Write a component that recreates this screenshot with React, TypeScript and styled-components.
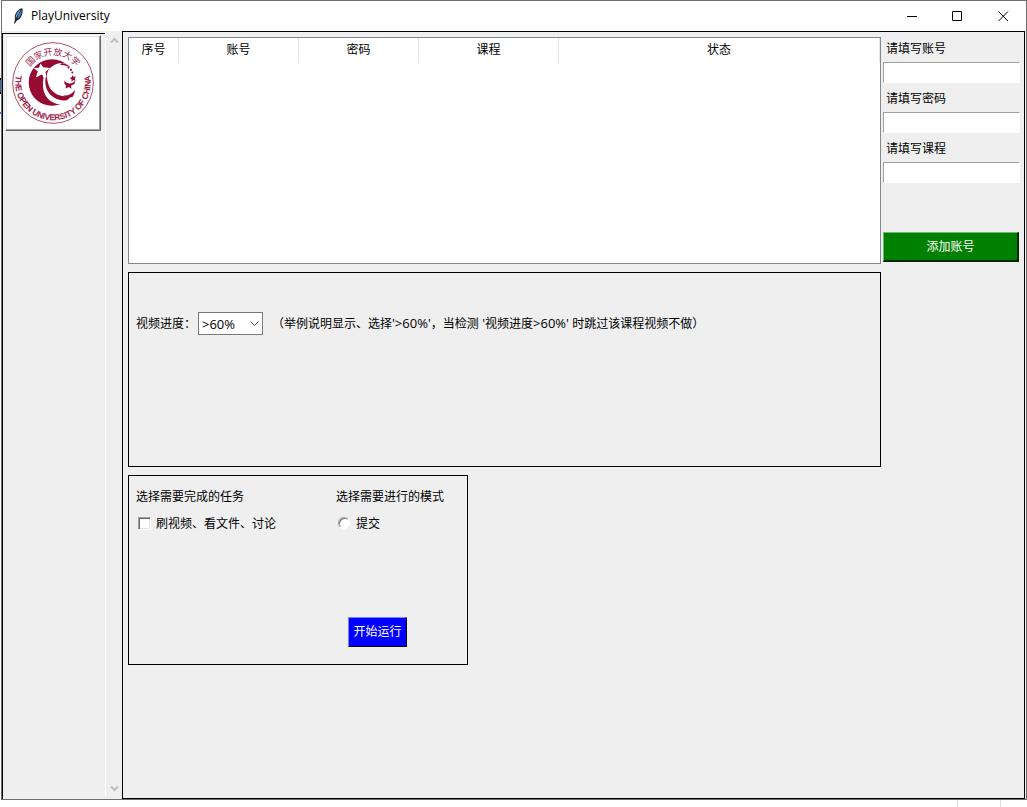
import React, { useState } from "react";
import styled, { createGlobalStyle, css } from "styled-components";

const GlobalStyle = createGlobalStyle`
  *, *::before, *::after { box-sizing: border-box; }
  html, body, #root { height: 100%; }
  body {
    margin: 0;
    background: #fff;
    color: #000;
    font: 12px/16px "Open Sans", "Noto Sans CJK SC", sans-serif;
  }
  button, input, select { font: inherit; color: inherit; margin: 0; }
`;

/* The desktop shows slivers of other windows at its left and bottom edges. */
const Desktop = styled.div`
  display: flex;
  min-height: 100%;
  padding: 0 0 7px 1px;
  background:
    linear-gradient(#000 2px, #2b6cb0 2px 14px, #000 14px 16px, #fff 16px 34px, #2f7de0 34px) left 78px / 1px 36px no-repeat,
    linear-gradient(#ddd, #ddd) right 69px bottom / 1px 7px no-repeat,
    linear-gradient(#ddd, #ddd) right 26px bottom / 1px 7px no-repeat,
    #fff;
`;

const Window = styled.div`
  flex: 1;
  display: flex;
  flex-direction: column;
  min-width: 0;
  border: 1px solid #6d6d6d;
  background: #efefef;
`;

const TitleBar = styled.header`
  display: flex;
  align-items: center;
  height: 30px;
  padding-left: 10px;
  background: #fff;
`;

const Title = styled.h1`
  flex: 1;
  margin: 0 0 0 5px;
  font-size: 12px;
  font-weight: 400;
`;

const WindowButton = styled.button`
  display: flex;
  align-items: center;
  justify-content: center;
  width: 46px;
  height: 30px;
  padding: 0;
  border: 0;
  background: none;
`;

const Body = styled.div`
  flex: 1;
  display: grid;
  grid-template-columns: 103px 17px 1fr;
  padding-right: 1px;
`;

const Sidebar = styled.nav`
  margin-top: 2px;
  padding: 1px 2px;
  border: solid #000;
  border-width: 1px 0 0 1px;
`;

const LogoButton = styled.button`
  display: block;
  width: 96px;
  height: 96px;
  padding: 0;
  background: #fff;
  border: 1px solid;
  border-color: #fff #696969 #696969 #fff;
  box-shadow: inset -1px -1px #a0a0a0, inset 1px 1px #e3e3e3;
`;

const ScrollTrack = styled.div`
  display: flex;
  flex-direction: column;
  justify-content: space-between;
  align-items: center;
  margin-bottom: 3px;
  padding: 6px 0 4px;
  border-left: 1px solid #fff;
`;

const ScrollButton = styled.button`
  display: flex;
  padding: 0;
  border: 0;
  background: none;
`;

const Main = styled.main`
  display: grid;
  grid-template-columns: 1fr 137px;
  align-content: start;
  column-gap: 2px;
  row-gap: 8px;
  padding: 5px 4px 5px 5px;
  border: 1px solid #000;
`;

const TableBox = styled.div`
  height: 227px;
  background: #fff;
  border: 1px solid #828790;
`;

const Table = styled.table`
  width: 100%;
  table-layout: fixed;
  border-collapse: separate;
  border-spacing: 0;
`;

const HeaderCell = styled.th<{ $width?: number }>`
  width: ${(p) => (p.$width ? `${p.$width}px` : "auto")};
  height: 25px;
  padding: 0 0 2px;
  font-weight: 400;
  text-align: center;
  border-right: 1px solid #e5e5e5;
`;

const AccountForm = styled.form`
  display: flex;
  flex-direction: column;
`;

const Field = styled.label`
  display: flex;
  flex-direction: column;
  height: 50px;
  padding-top: 4px;
`;

const FieldName = styled.span`
  padding: 0 3px;
  margin-bottom: 5px;
`;

const Entry = styled.input`
  width: 100%;
  height: 21px;
  padding: 0 4px;
  background: #fff;
  border: 1px solid;
  border-color: #a0a0a0 #fff #fff #a0a0a0;
  outline: 0;
`;

const ActionButton = styled.button<{ $tone: "green" | "blue" }>`
  height: 30px;
  min-width: 59px;
  padding: 0 4px;
  color: #fff;
  border: solid;
  ${(p) =>
    p.$tone === "green"
      ? css`
          background: #008000;
          border-width: 1px 2px 2px 1px;
          border-color: #70b870 #002800 #002800 #70b870;
        `
      : css`
          background: #0000ff;
          border-width: 1px;
          border-color: #8080ff #000 #000 #8080ff;
        `}
`;

const AddRow = styled.div`
  display: flex;
  flex: 1;
  align-items: flex-end;
  padding: 0 1px 2px 0;
  > button { flex: 1; }
`;

const Panel = styled.section`
  border: 1px solid #000;
`;

const ProgressPanel = styled(Panel)`
  display: flex;
  align-items: flex-start;
  height: 195px;
  padding: 39px 7px 0;
`;

const ProgressLabel = styled.label`
  width: 62px;
  line-height: 23px;
  white-space: nowrap;
`;

const SelectWrap = styled.span`
  display: grid;
  align-items: center;
  > * { grid-area: 1 / 1; }
  > svg { justify-self: end; margin-right: 4px; pointer-events: none; }
`;

const Select = styled.select`
  appearance: none;
  width: 65px;
  height: 23px;
  padding: 0 3px;
  font-size: 13px;
  background: #fff;
  border: 1px solid #7a7a7a;
  border-radius: 0;
`;

const Note = styled.p`
  margin: 0 0 0 9px;
  line-height: 23px;
`;

const Latin = styled.span`
  font-size: 13px;
`;

const TaskPanel = styled(Panel)`
  display: flex;
  flex-direction: column;
  justify-content: space-between;
  width: 340px;
  height: 190px;
  padding: 13px 7px 17px;
`;

const Groups = styled.div`
  display: grid;
  grid-template-columns: 200px 1fr;
`;

const Group = styled.fieldset`
  min-width: 0;
  margin: 0;
  padding: 0;
  border: 0;
`;

const Legend = styled.legend`
  padding: 0;
  margin-bottom: 11px;
`;

const Option = styled.label`
  display: flex;
  align-items: flex-start;
  gap: 5px;
  padding-left: 2px;
`;

const Mark = styled.input`
  && { margin-top: 1px; }
  appearance: none;
  width: 13px;
  height: 13px;
  background: #fff;
  border: 1px solid;
  border-color: #a0a0a0 #fff #fff #a0a0a0;
  &[type="checkbox"] { box-shadow: inset 1px 1px #696969, inset -1px -1px #e3e3e3; }
  &[type="radio"] {
    width: 12px;
    height: 12px;
    margin-right: 1px;
    border-radius: 50%;
    box-shadow: inset 1px 1px #777;
  }
  &:checked { background: radial-gradient(circle, #000 3px, #fff 3px); }
`;

const RunRow = styled.div`
  display: flex;
  padding-left: 212px;
`;

const Feather = () => (
  <svg width="14" height="18" viewBox="0 0 14 18" aria-hidden="true">
    <path d="M2.500 16.500 3 12C2.300 9.500 3.200 6.500 5 4.500 6.500 2.500 8.500 1.500 10.200 1.200 11 3 10.600 6 9.900 8 9 10.500 7.500 12.500 5 13.500Z" fill="#17242f" />
    <path d="M3.800 11.500C3.300 8.500 5 5.500 8.800 2.300 7.500 6 5.500 8.500 3.800 11.500Z" fill="#6fb0ea" />
    <path d="M5.200 11.500C6 8.500 7.500 5.500 9.600 3.200 9.900 7 8 10.500 5.200 11.500Z" fill="#4a86bf" />
    <path d="M2.500 16.500 4 12.500" fill="none" stroke="#222" />
  </svg>
);

const Seal = () => (
  <svg width="94" height="94" viewBox="-2 -2 94 94" role="img" aria-label="国家开放大学" style={{ display: "block" }}>
    <defs>
      <path id="seal-top" d="M17 45A28 28 0 0 1 73 45" />
      <path id="seal-bottom" d="M9.700 32A37.500 37.500 0 1 0 80.300 32" />
    </defs>
    <circle cx="45" cy="45" r="40.300" fill="#fff" stroke="#a83a5c" strokeWidth=".9" />
    <circle cx="44" cy="44.500" r="23.300" fill="#970a32" />
    {/* opening on the right and the round hollow of the moon */}
    <path d="M40 33C44 27 51 24 57 25.500L61 27 70 26 72 60 63 57C54 61 42 55 40 45 39 40 38 37 40 33Z" fill="#fff" />
    {/* band that trails from the large star */}
    <path d="M33 32C36 33 38 35 38 38 35 50 42 61 55 62.500 60 63 64 61 67 58L64 62C60 65 55 67 49 66 38 63 33 53 35.500 40Z" fill="#fff" />
    <path d="m32.500 25.500 2.800 3.800 7 .700-4.800 3.700 1 6-4.700-3.200-6 3 2-6-4-3.500 5.200-.2Z" fill="#fff" />
    <path d="M54 25C58 25.500 61 27.500 62 29.500 61 28.500 57 27 52 27Z" fill="#970a32" />
    {/* tail of the bird and the small star */}
    <path d="M56.500 42.500C58 45 61 46 64.500 45L67 42.500 66.500 46 63 47.500 63.500 51 61 49 57.500 50.500 58 47.500C56.500 46.500 56 44.500 56.500 42.500Z" fill="#970a32" />
    <path d="M55 57.500C60 58 64 56 66.800 52 67 54 66 57 64.500 59 61 60 58 59.500 55 57.500Z" fill="#970a32" />
    <path d="m64.500 37 1.300 2 2.400-.4-1.500 2 1 2.200-2.400-.8-1.800 1.700v-2.400l-2-1.300 2.400-.7Z" fill="#970a32" />
    <g fill="#970a32">
      <circle cx="60.500" cy="29.500" r="1.100" />
      <circle cx="63" cy="31.800" r="1.100" />
      <circle cx="64.300" cy="34.600" r="1" />
    </g>
    <text fontFamily="'Noto Sans CJK SC', sans-serif" fontSize="9" fill="#a02a50">
      <textPath href="#seal-top" startOffset="50%" textAnchor="middle">国家开放大学</textPath>
    </text>
    <text fontFamily="'Liberation Sans Narrow', 'Liberation Sans', sans-serif" fontSize="8" fill="#970a32" stroke="#970a32" strokeWidth=".3">
      <textPath href="#seal-bottom" startOffset="50%" textAnchor="middle">THE OPEN UNIVERSITY OF CHINA</textPath>
    </text>
  </svg>
);

const Chevron = ({ up = false }: { up?: boolean }) => (
  <svg width="9" height="7" viewBox="0 0 9 7" aria-hidden="true">
    <path d={up ? "M1 5.500 4.500 2 8 5.500" : "M1 1.500 4.500 5 8 1.500"} fill="none" stroke="#bfbfbf" strokeWidth="2" />
  </svg>
);

const columns = [
  { name: "序号", width: 50 },
  { name: "账号", width: 120 },
  { name: "密码", width: 120 },
  { name: "课程", width: 140 },
  { name: "状态" },
];

const fields = ["请填写账号", "请填写密码", "请填写课程"];

export default function App() {
  const [progress, setProgress] = useState(">60%");
  return (
    <>
      <GlobalStyle />
      <Desktop>
        <Window>
          <TitleBar>
            <Feather />
            <Title>PlayUniversity</Title>
            <WindowButton aria-label="最小化">
              <svg width="11" height="11"><path d="M1 5.500H11" stroke="#000" /></svg>
            </WindowButton>
            <WindowButton aria-label="最大化">
              <svg width="11" height="11"><path d="M.5.5H9.500V9.500H.5Z" fill="none" stroke="#000" /></svg>
            </WindowButton>
            <WindowButton aria-label="关闭">
              <svg width="11" height="11"><path d="M.5.5 10 10M10 .5.5 10" stroke="#000" /></svg>
            </WindowButton>
          </TitleBar>
          <Body>
            <Sidebar>
              <LogoButton><Seal /></LogoButton>
            </Sidebar>
            <ScrollTrack>
              <ScrollButton aria-label="向上滚动"><Chevron up /></ScrollButton>
              <ScrollButton aria-label="向下滚动"><Chevron /></ScrollButton>
            </ScrollTrack>
            <Main>
              <TableBox>
                <Table>
                  <thead>
                    <tr>
                      {columns.map((c) => (
                        <HeaderCell key={c.name} $width={c.width}>{c.name}</HeaderCell>
                      ))}
                    </tr>
                  </thead>
                </Table>
              </TableBox>
              <AccountForm onSubmit={(e) => e.preventDefault()}>
                {fields.map((name) => (
                  <Field key={name}>
                    <FieldName>{name}</FieldName>
                    <Entry />
                  </Field>
                ))}
                <AddRow>
                  <ActionButton $tone="green">添加账号</ActionButton>
                </AddRow>
              </AccountForm>
              <ProgressPanel>
                <ProgressLabel htmlFor="progress">视频进度：</ProgressLabel>
                <SelectWrap>
                  <Select id="progress" value={progress} onChange={(e) => setProgress(e.target.value)}>
                    <option>&gt;60%</option>
                    <option>&gt;80%</option>
                  </Select>
                  <svg width="9" height="6"><path d="M.5.5 4.500 4.500 8.500.5" fill="none" stroke="#555" /></svg>
                </SelectWrap>
                <Note>
                  （举例说明显示、选择<Latin>'&gt;60%'</Latin>，当检测<Latin> '</Latin>视频进度<Latin>&gt;60%' </Latin>时跳过该课程视频不做）
                </Note>
              </ProgressPanel>
              <span />
              <TaskPanel>
                <Groups>
                  <Group>
                    <Legend>选择需要完成的任务</Legend>
                    <Option><Mark type="checkbox" />刷视频、看文件、讨论</Option>
                  </Group>
                  <Group>
                    <Legend>选择需要进行的模式</Legend>
                    <Option><Mark type="radio" name="mode" />提交</Option>
                  </Group>
                </Groups>
                <RunRow>
                  <ActionButton $tone="blue">开始运行</ActionButton>
                </RunRow>
              </TaskPanel>
            </Main>
          </Body>
        </Window>
      </Desktop>
    </>
  );
}
